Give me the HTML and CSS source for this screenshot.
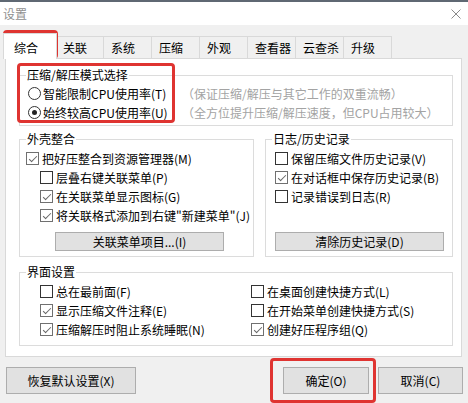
FILE: index.html
```html
<!DOCTYPE html>
<html lang="zh-CN">
<head>
  <meta charset="UTF-8" />
  <title>设置</title>
  <link rel="stylesheet" href="styles.css">
</head>
<body>
  <div class="window">
    <div class="titlebar">
      <span class="title">设置</span>
      <svg class="close" width="10" height="10" viewBox="0 0 10 10"><path d="M0.5 0.5L9.5 9.5M9.5 0.5L0.5 9.5" stroke="#8a8a8a" stroke-width="1" fill="none"/></svg>
    </div>

    <div class="tabs">
      <div class="tab active">综合</div>
      <div class="tab">关联</div>
      <div class="tab">系统</div>
      <div class="tab">压缩</div>
      <div class="tab">外观</div>
      <div class="tab">查看器</div>
      <div class="tab">云查杀</div>
      <div class="tab">升级</div>
    </div>

    <div class="panel">
      <fieldset class="group mode">
        <legend>压缩/解压模式选择</legend>
        <div class="mode-row">
          <label class="opt"><span class="radio"></span>智能限制CPU使用率(T)</label>
          <span class="hint">（保证压缩/解压与其它工作的双重流畅）</span>
        </div>
        <div class="mode-row">
          <label class="opt"><span class="radio on"></span>始终较高CPU使用率(U)</label>
          <span class="hint">（全方位提升压缩/解压速度，但CPU占用较大）</span>
        </div>
      </fieldset>

      <div class="pair">
        <fieldset class="group shell">
          <legend>外壳整合</legend>
          <label class="opt"><span class="check on"></span>把好压整合到资源管理器(M)</label>
          <label class="opt sub"><span class="check"></span>层叠右键关联菜单(P)</label>
          <label class="opt sub"><span class="check on"></span>在关联菜单显示图标(G)</label>
          <label class="opt sub"><span class="check on"></span>将关联格式添加到右键"新建菜单"(J)</label>
          <button class="btn small assoc">关联菜单项目...(I)</button>
        </fieldset>

        <fieldset class="group log">
          <legend>日志/历史记录</legend>
          <label class="opt"><span class="check"></span>保留压缩文件历史记录(V)</label>
          <label class="opt"><span class="check on"></span>在对话框中保存历史记录(B)</label>
          <label class="opt"><span class="check"></span>记录错误到日志(R)</label>
          <button class="btn small clear">清除历史记录(D)</button>
        </fieldset>
      </div>

      <fieldset class="group ui">
        <legend>界面设置</legend>
        <div class="ui-grid">
          <label class="opt"><span class="check"></span>总在最前面(F)</label>
          <label class="opt"><span class="check"></span>在桌面创建快捷方式(L)</label>
          <label class="opt"><span class="check on"></span>显示压缩文件注释(E)</label>
          <label class="opt"><span class="check"></span>在开始菜单创建快捷方式(S)</label>
          <label class="opt"><span class="check on"></span>压缩解压时阻止系统睡眠(N)</label>
          <label class="opt"><span class="check on"></span>创建好压程序组(Q)</label>
        </div>
      </fieldset>
    </div>

    <div class="footer">
      <button class="btn big reset">恢复默认设置(X)</button>
      <button class="btn big ok">确定(O)</button>
      <button class="btn big cancel">取消(C)</button>
    </div>

    <!-- red highlight marks over the dialog -->
    <div class="mark mark-tab"></div>
    <div class="mark mark-mode"></div>
    <div class="mark mark-ok"></div>
  </div>
</body>
</html>
```

FILE: styles.css
```css
body { margin: 0; background: #f0f0f0; color: #000; font: 12px "Noto Sans CJK SC", "Noto Sans", sans-serif; }
.window { position: relative; width: 468px; height: 403px; overflow: hidden; }

.titlebar { height: 23px; border-top: 2px solid #5f6873; background: #fff; display: flex; align-items: center; justify-content: space-between; padding: 0 7px 0 3px; }
.title { color: #8f8f8f; line-height: 16px; }

.tabs { height: 33px; display: flex; align-items: flex-end; padding-left: 5px; }
.tab { width: 49px; height: 22px; box-sizing: border-box; margin-right: -1px; border: 1px solid #d9d9d9; border-bottom: 0; padding-left: 7px; line-height: 21px; background: #f0f0f0; }
.tab.active { position: relative; z-index: 1; width: 54px; height: 26px; margin: 0 -2px -1px -2px; padding: 3px 0 0 10px; background: #fff; }

.panel { margin: 0 6px 0 5px; height: 299px; box-sizing: border-box; border: 1px solid #d9d9d9; background: #fff; padding: 8px 8px 0 13px; }

.group { margin: 0; min-width: 0; border: 1px solid #dcdcdc; padding: 2px 6px 5px 6px; }
.group legend { padding: 0 1px; line-height: 16px; }

.opt { display: flex; align-items: center; gap: 3px; height: 19px; white-space: nowrap; }
.radio { width: 13px; height: 13px; box-sizing: border-box; border: 1px solid #333; border-radius: 50%; display: grid; place-items: center; flex: none; }
.radio.on::after { content: ""; width: 5px; height: 5px; border-radius: 50%; background: #222; }
.check { width: 13px; height: 13px; box-sizing: border-box; border: 1px solid #333; display: grid; place-items: center; flex: none; }
.check.on { border-color: #707070; }
.check.on::after { content: ""; width: 3px; height: 7px; margin-top: -2px; border: solid #666; border-width: 0 1px 1px 0; transform: rotate(45deg); }

.mode { padding: 1px 6px 3px 6px; }
.mode-row { display: grid; grid-template-columns: 154px auto; margin-left: 2px; }
.mode .opt { gap: 2px; }
.hint { color: #a3a3a3; line-height: 19px; white-space: nowrap; }

.pair { display: flex; gap: 11px; margin-top: 5px; }
.shell { width: 235px; box-sizing: border-box; }
.log { flex: 1; }
.log .opt { margin-left: 3px; }
.sub { margin-left: 14px; }

.btn { font: 12px "Noto Sans CJK SC", "Noto Sans", sans-serif; color: #000; background: #e1e1e1; border: 1px solid #adadad; padding: 0; display: block; }
.btn.small { width: 169px; height: 19px; line-height: 17px; }
.assoc { margin: 7px 0 0 29px; }
.clear { margin: 26px 0 0 3px; }

.ui { margin-top: 7px; padding-bottom: 6px; }
.ui-grid { display: grid; grid-template-columns: 211px auto; margin-left: 14px; }

.footer { display: flex; padding: 10px 5px 0 6px; }
.btn.big { height: 27px; }
.reset { width: 130px; }
.ok { width: 86px; margin-left: auto; }
.cancel { width: 85px; margin-left: 9px; }

.mark { position: absolute; box-sizing: border-box; border: 3px solid #df3431; border-radius: 4px; }
.mark-tab { left: 3px; top: 30px; width: 55px; height: 29px; }
.mark-mode { left: 17px; top: 63px; width: 158px; height: 60px; }
.mark-ok { left: 270px; top: 358px; width: 106px; height: 45px; }
```
